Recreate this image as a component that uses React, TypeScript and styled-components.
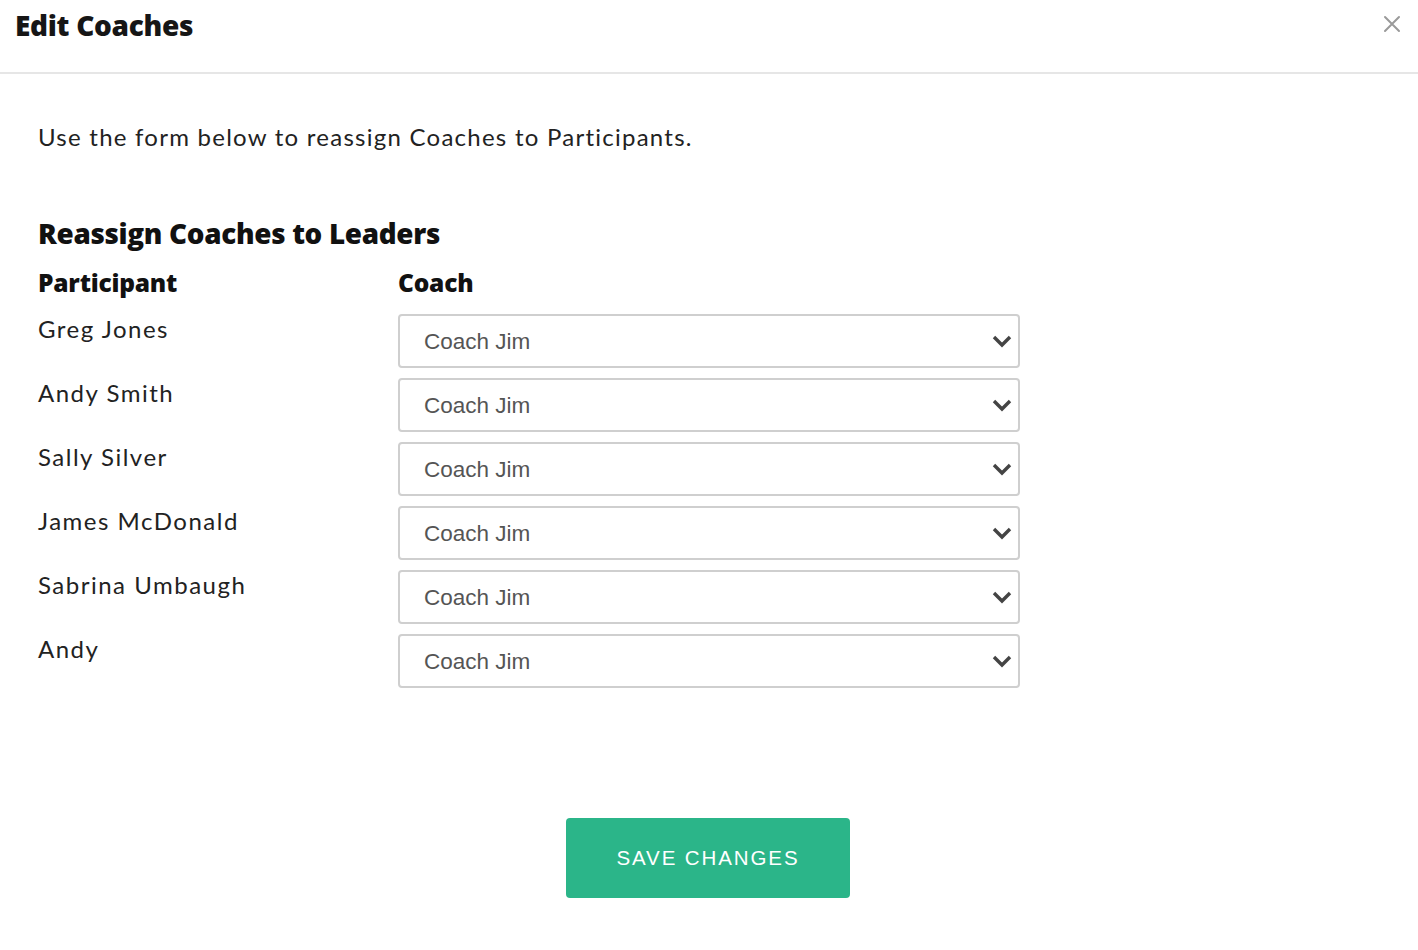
import React from "react";
import styled, { createGlobalStyle } from "styled-components";

const Global = createGlobalStyle`
  html, body { margin: 0; padding: 0; background: #fff; }
  body { font-family: Lato, "Open Sans", sans-serif; color: #222; }
  * { box-sizing: border-box; }
`;

const Page = styled.div`
  width: 1418px;
  min-height: 950px;
  background: #fff;
`;

const Header = styled.header`
  position: relative;
  height: 74px;
  border-bottom: 2px solid #e6e6e6;
  padding: 8px 0 0 15px;
`;

const Title = styled.h1`
  margin: 0;
  font-family: "Open Sans", sans-serif;
  font-weight: 800;
  font-size: 28px;
  line-height: 34px;
  letter-spacing: -0.3px;
  color: #161616;
`;

const Close = styled.button`
  position: absolute;
  top: 14px;
  right: 16px;
  width: 20px;
  height: 20px;
  padding: 0;
  border: none;
  background: none;
  display: flex;
  align-items: center;
  justify-content: center;
`;

const Body = styled.main`
  padding: 48px 0 0 38px;
`;

const Intro = styled.p`
  margin: 0;
  font-size: 24px;
  line-height: 30px;
  font-weight: 400;
  letter-spacing: 1.25px;
  color: #222;
`;

const Section = styled.h2`
  margin: 63px 0 0;
  font-family: "Open Sans", sans-serif;
  font-weight: 800;
  font-size: 27.8px;
  line-height: 36px;
  letter-spacing: -0.3px;
  color: #111;
`;

const Grid = styled.div`
  display: grid;
  grid-template-columns: 360px 622px;
  row-gap: 10px;
  margin-top: 17px;
`;

const ColHead = styled.div`
  font-family: "Open Sans", sans-serif;
  font-weight: 800;
  font-size: 24.5px;
  line-height: 30px;
  letter-spacing: -0.2px;
  color: #111;
  margin-bottom: 6px;
`;

const Name = styled.div`
  font-size: 24px;
  line-height: 30px;
  letter-spacing: 1.5px;
  color: #222;
`;

const SelectWrap = styled.div`
  position: relative;
  height: 54px;
`;

const Select = styled.select`
  appearance: none;
  -webkit-appearance: none;
  width: 100%;
  height: 100%;
  border: 2px solid #cfcfcf;
  border-radius: 4px;
  background: #fff;
  padding: 0 0 0 24px;
  font-family: "Liberation Sans", Arial, sans-serif;
  font-size: 22.5px;
  color: #555;
  outline: none;
`;

const Chevron = styled.svg`
  position: absolute;
  right: 8px;
  top: 20px;
  pointer-events: none;
`;

const Footer = styled.div`
  display: flex;
  justify-content: center;
  padding: 130px 40px 0 0;
`;

const SaveButton = styled.button`
  width: 284px;
  height: 80px;
  border: none;
  border-radius: 4px;
  background: #2bb589;
  color: #fff;
  font-family: "Liberation Sans", Arial, sans-serif;
  font-size: 20.5px;
  letter-spacing: 1.9px;
  cursor: pointer;
`;

const participants = [
  "Greg Jones",
  "Andy Smith",
  "Sally Silver",
  "James McDonald",
  "Sabrina Umbaugh",
  "Andy",
];

export default function App() {
  return (
    <Page>
      <Global />
      <Header>
        <Title>Edit Coaches</Title>
        <Close aria-label="Close">
          <svg width="18" height="18" viewBox="0 0 18 18">
            <path d="M2 2 L16 16 M16 2 L2 16" stroke="#9a9a9a" strokeWidth="2" strokeLinecap="round" />
          </svg>
        </Close>
      </Header>
      <Body>
        <Intro>Use the form below to reassign Coaches to Participants.</Intro>
        <Section>Reassign Coaches to Leaders</Section>
        <Grid>
          <ColHead>Participant</ColHead>
          <ColHead>Coach</ColHead>
          {participants.map((p) => (
            <React.Fragment key={p}>
              <Name>{p}</Name>
              <SelectWrap>
                <Select defaultValue="jim">
                  <option value="jim">Coach Jim</option>
                </Select>
                <Chevron width="20" height="14" viewBox="0 0 20 14">
                  <polyline points="2,3 10,11 18,3" fill="none" stroke="#444" strokeWidth="3.4" strokeLinejoin="miter" />
                </Chevron>
              </SelectWrap>
            </React.Fragment>
          ))}
        </Grid>
        <Footer>
          <SaveButton>SAVE CHANGES</SaveButton>
        </Footer>
      </Body>
    </Page>
  );
}
